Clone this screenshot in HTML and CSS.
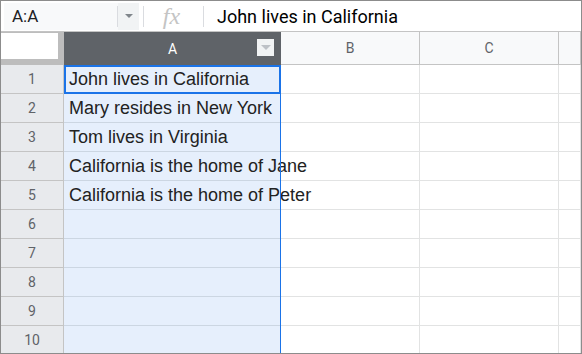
FILE: index.html
```html
<!DOCTYPE html>
<html lang="en">
<head>
  <meta charset="UTF-8" />
  <title>Sheet</title>
  <link rel="stylesheet" href="styles.css">
</head>
<body>
  <div class="sheet">
    <!-- formula bar -->
    <div class="formula-bar">
      <div class="name-box">
        <span class="name-text">A:A</span>
        <span class="name-drop"><span class="tri"></span></span>
      </div>
      <span class="sep"></span>
      <span class="fx">fx</span>
      <span class="sep"></span>
      <span class="formula-text">John lives in California</span>
    </div>

    <!-- grid -->
    <div class="grid">
      <div class="corner"><div class="corner-inner"></div></div>
      <div class="col-hdr col-a">A<span class="hdr-btn"><span class="tri"></span></span></div>
      <div class="col-hdr">B</div>
      <div class="col-hdr">C</div>
      <div class="col-hdr"></div>

      <div class="row-hdr">1</div><div class="cell sel">John lives in California</div><div class="cell"></div><div class="cell"></div><div class="cell"></div>
      <div class="row-hdr">2</div><div class="cell sel">Mary resides in New York</div><div class="cell"></div><div class="cell"></div><div class="cell"></div>
      <div class="row-hdr">3</div><div class="cell sel">Tom lives in Virginia</div><div class="cell"></div><div class="cell"></div><div class="cell"></div>
      <div class="row-hdr">4</div><div class="cell sel">California is the home of Jane</div><div class="cell"></div><div class="cell"></div><div class="cell"></div>
      <div class="row-hdr">5</div><div class="cell sel">California is the home of Peter</div><div class="cell"></div><div class="cell"></div><div class="cell"></div>
      <div class="row-hdr">6</div><div class="cell sel"></div><div class="cell"></div><div class="cell"></div><div class="cell"></div>
      <div class="row-hdr">7</div><div class="cell sel"></div><div class="cell"></div><div class="cell"></div><div class="cell"></div>
      <div class="row-hdr">8</div><div class="cell sel"></div><div class="cell"></div><div class="cell"></div><div class="cell"></div>
      <div class="row-hdr">9</div><div class="cell sel"></div><div class="cell"></div><div class="cell"></div><div class="cell"></div>
      <div class="row-hdr">10</div><div class="cell sel"></div><div class="cell"></div><div class="cell"></div><div class="cell"></div>

      <!-- selection overlay -->
      <div class="sel-col"></div>
      <div class="active-cell"></div>
    </div>
  </div>
</body>
</html>
```

FILE: styles.css
```css
* {
  box-sizing: border-box;
}
body {
  margin: 0;
  font-family: Roboto, sans-serif;
  background: #fff;
}
.sheet {
  width: 582px;
  height: 354px;
  border: 1px solid #8c8c8c;
  overflow: hidden;
  background: #fff;
}
.formula-bar {
  height: 31px;
  display: flex;
  align-items: center;
  border-bottom: 1px solid #c4c4c4;
  padding-left: 3px;
}
.name-box {
  display: flex;
  width: 135px;
  height: 27px;
  background: #f8f9fa;
}
.name-text {
  flex: 1;
  font-size: 17px;
  color: #202124;
  padding-left: 8px;
  border-right: 1px solid #dadce0;
  margin: 3px 0;
  line-height: 21px;
}
.name-drop {
  width: 21px;
  display: flex;
  align-items: center;
  justify-content: center;
  background: #f1f3f4;
}
.tri {
  width: 0;
  height: 0;
  border-left: 4px solid transparent;
  border-right: 4px solid transparent;
  border-top: 4px solid #80868b;
}
.sep {
  width: 1px;
  height: 21px;
  background: #dadce0;
  margin-left: 4px;
}
.fx {
  font-family: "Liberation Serif", serif;
  font-style: italic;
  font-size: 24px;
  color: #c4c4c4;
  width: 55px;
  text-align: center;
  line-height: 27px;
}
.formula-text {
  font-size: 18px;
  color: #000;
  margin-left: 13px;
}
.grid {
  position: relative;
  display: grid;
  grid-template-columns: 63px 217px 139px 139px 22px;
  grid-template-rows: 33px repeat(10, 29px);
}
.corner {
  background: #bdbdbd;
  padding: 1px 6px 6px 0;
}
.corner-inner {
  background: #fff;
  height: 100%;
}
.col-hdr {
  background: #f8f9fa;
  border-right: 1px solid #c4c4c4;
  border-bottom: 1px solid #c4c4c4;
  display: flex;
  align-items: center;
  justify-content: center;
  font-size: 14px;
  color: #5f6368;
}
.col-hdr.col-a {
  background: #5f6368;
  color: #fff;
  border-right: none;
  border-bottom: none;
  position: relative;
}
.hdr-btn {
  position: absolute;
  right: 7px;
  top: 7px;
  width: 17px;
  height: 17px;
  background: #f1f3f4;
  display: flex;
  align-items: center;
  justify-content: center;
}
.hdr-btn .tri {
  border-left-width: 5px;
  border-right-width: 5px;
  border-top: 5px solid #bdc1c6;
}
.row-hdr {
  background: #e8eaed;
  border-right: 1px solid #c4c4c4;
  border-bottom: 1px solid #c4c4c4;
  display: flex;
  align-items: center;
  justify-content: center;
  font-size: 14px;
  color: #5f6368;
}
.cell {
  border-right: 1px solid #e2e3e3;
  border-bottom: 1px solid #e2e3e3;
  font-family: "Liberation Sans", Arial, sans-serif;
  font-size: 18px;
  color: #222;
  padding: 0 5px;
  line-height: 29px;
  white-space: nowrap;
}
.cell.sel {
  background: #e6effc;
  border-right: none;
  border-bottom-color: #ccd6e2;
}
.sel-col {
  position: absolute;
  left: 279px;
  top: 33px;
  bottom: 0;
  width: 1px;
  background: #1a73e8;
}
.active-cell {
  position: absolute;
  left: 63px;
  top: 33px;
  width: 217px;
  height: 29px;
  border: 2px solid #1a73e8;
}
```
